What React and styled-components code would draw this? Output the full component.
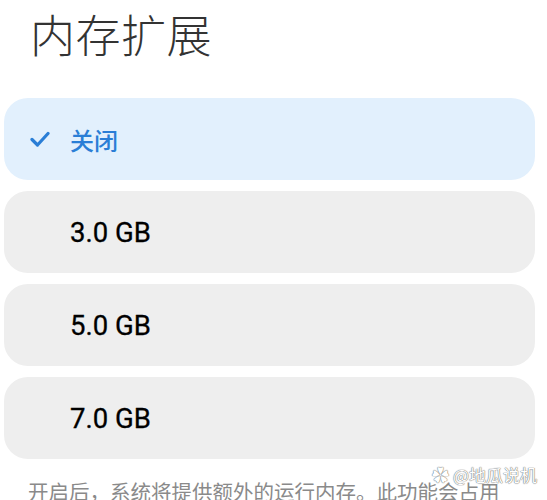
import styled, { createGlobalStyle } from 'styled-components';

const GlobalStyle = createGlobalStyle`
    body {
        margin: 0;
        background: #ffffff;
        font-family: Roboto, "Noto Sans CJK SC", sans-serif;
        overflow: hidden;
    }
`;

const options = [
    { label: '关闭', active: true },
    { label: '3.0 GB' },
    { label: '5.0 GB' },
    { label: '7.0 GB' },
];

function CheckIcon() {
    return (
        <svg width="20" height="16" viewBox="0 0 20 16" fill="none">
            <path d="M2 8.5L7.5 14L18 2.5" stroke="#2a7ed6" strokeWidth="3.2" strokeLinecap="round" strokeLinejoin="round" />
        </svg>
    );
}

function App() {
    return (
        <Page>
            <GlobalStyle />
            <Title>内存扩展</Title>
            <OptionList>
                {options.map((item, index) => (
                    <Option key={index} active={item.active}>
                        <span className="check">{item.active && <CheckIcon />}</span>
                        <span className="label">{item.label}</span>
                    </Option>
                ))}
            </OptionList>
            <Note>开启后，系统将提供额外的运行内存。此功能会占用</Note>
            <Watermark>✿ @地瓜说机</Watermark>
        </Page>
    );
}

export default App;

const Page = styled.div`
    position: relative;
    width: 547px;
    height: 500px;
    overflow: hidden;
    padding: 0 12px 0 4px;
    box-sizing: border-box;
`;

const Title = styled.h1`
    margin: 0;
    padding: 6px 0 0 26px;
    height: 88px;
    box-sizing: border-box;
    font-family: "Noto Sans CJK SC", sans-serif;
    font-weight: 300;
    font-size: 45px;
    line-height: 56px;
    color: #333333;
    letter-spacing: 0.5px;
`;

const OptionList = styled.ul`
    list-style: none;
    margin: 10px 0 0;
    padding: 0;
    display: flex;
    flex-direction: column;
    gap: 11px;
`;

const Option = styled.li`
    height: 82px;
    border-radius: 24px;
    background: ${props => props.active ? '#e2f0fd' : '#eeeeee'};
    display: flex;
    align-items: center;
    padding-left: 26px;

    .check {
        width: 40px;
        display: flex;
        align-items: center;
    }

    .label {
        font-family: ${props => props.active ? '"Noto Sans CJK SC", sans-serif' : 'Roboto, sans-serif'};
        font-size: ${props => props.active ? '24px' : '27.5px'};
        font-weight: ${props => props.active ? 500 : 400};
        color: ${props => props.active ? '#2a7ed6' : '#000000'};
        -webkit-text-stroke: ${props => props.active ? '0' : '0.3px #000'};
    }
`;

const Note = styled.p`
    margin: 17px 0 0 24px;
    font-family: "Noto Sans CJK SC", sans-serif;
    font-size: 20.5px;
    line-height: 30px;
    color: #8a8a8a;
    white-space: nowrap;
`;

const Watermark = styled.span`
    position: absolute;
    right: 10px;
    top: 462px;
    font-family: "Noto Sans CJK SC", sans-serif;
    font-size: 17px;
    color: #ffffff;
    text-shadow: 0 0 1px #666, 0 0 1px #666;
`;
